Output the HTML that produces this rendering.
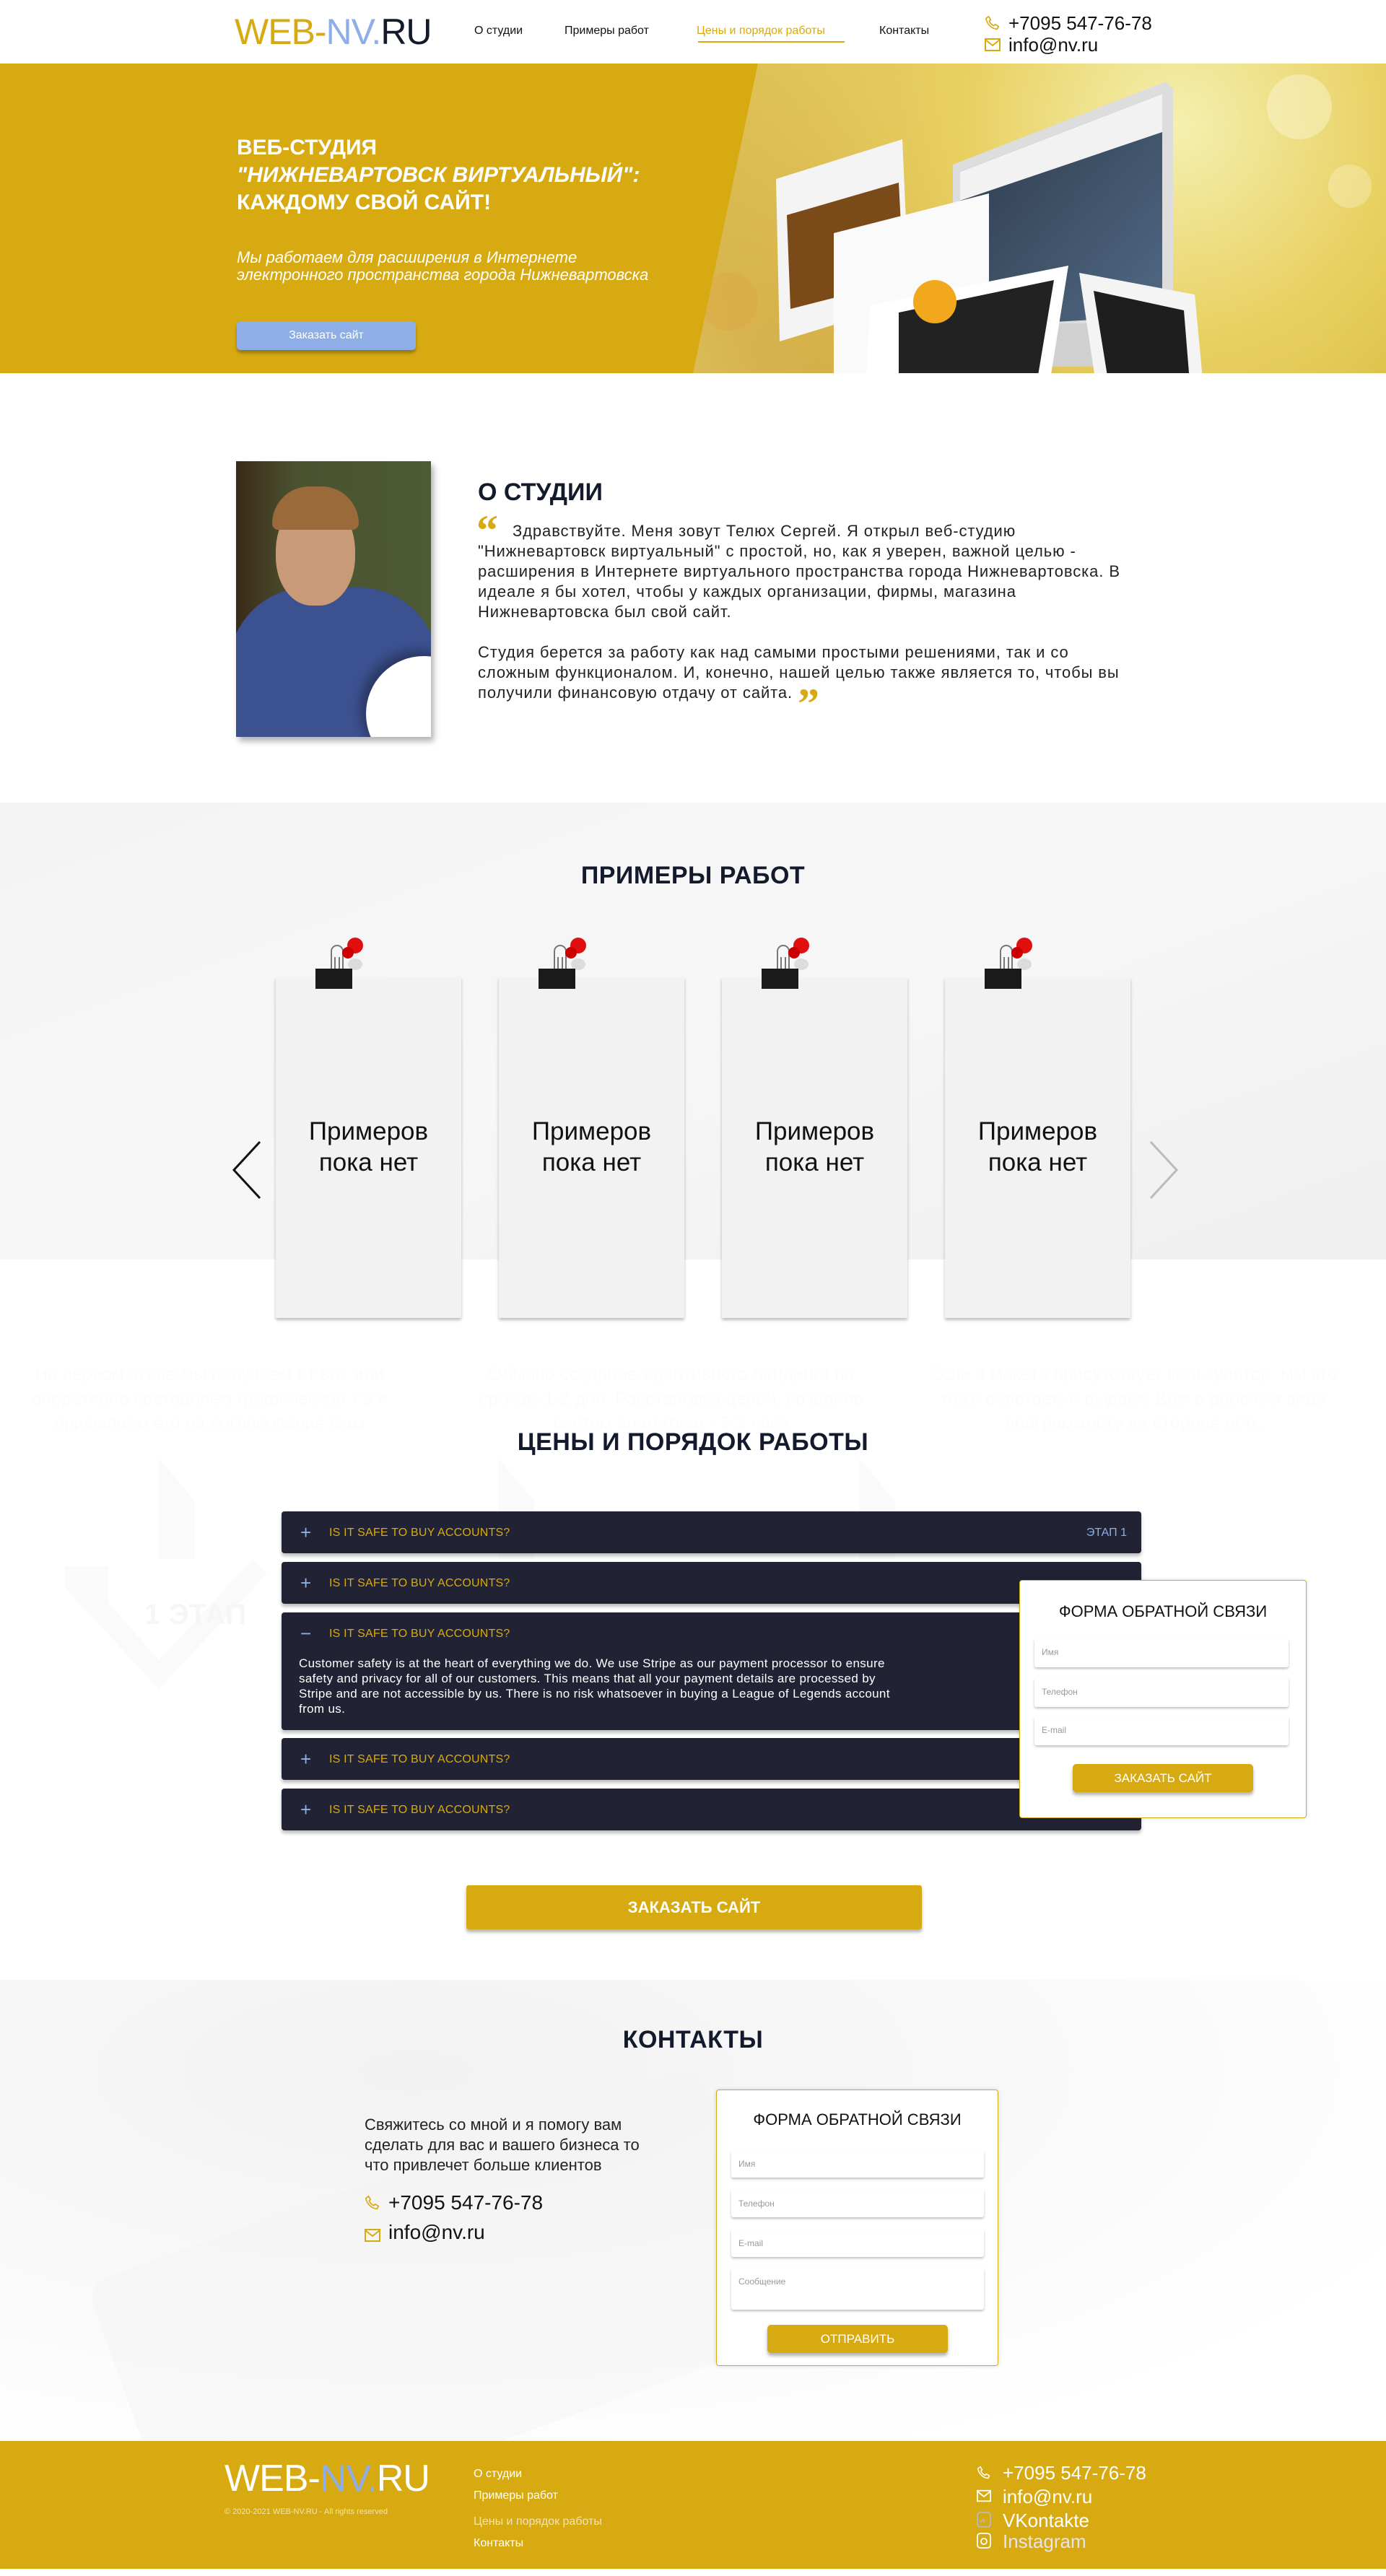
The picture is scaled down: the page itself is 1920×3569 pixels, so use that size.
<!DOCTYPE html>
<html><head><meta charset="utf-8">
<style>
*{margin:0;padding:0;box-sizing:border-box}
body{width:1920px;height:3569px;position:relative;background:#fff;font-family:"Liberation Sans",Arial,sans-serif;color:#111;overflow:hidden}
.a{position:absolute}
.navy{color:#131a2c}
.h2{font-size:34px;font-weight:bold;color:#131a2c;text-align:center;width:100%;letter-spacing:0.5px}
.card{position:absolute;top:1354px;width:257px;height:472px;background:#f2f2f2;box-shadow:0 3px 4px rgba(0,0,0,.25);text-align:center;font-size:35px;line-height:43px;color:#111;padding-top:192px}
.clip{position:absolute;top:-58px;left:52px}
.acc{position:absolute;left:390px;width:1191px;background:#212334;border-radius:4px;box-shadow:0 4px 5px rgba(0,0,0,.25);color:#d8aa12;font-size:16px}
.acc .t{position:absolute;left:66px;top:21px;letter-spacing:.2px}
.acc .p{position:absolute;left:26px;top:16px;color:#8daee6;font-size:26px;line-height:26px;font-weight:300}
.form{position:absolute;background:#fff;border:1px solid #d8aa12;border-radius:4px;box-shadow:0 0 6px rgba(0,0,0,.15)}
.inp{position:absolute;background:#fff;border-radius:3px;box-shadow:0 2px 3px rgba(0,0,0,.25);color:#999;font-size:12px;padding:12px 10px}
.btn{position:absolute;background:#d8aa12;color:#fff;text-align:center;border-radius:5px;box-shadow:0 4px 5px rgba(0,0,0,.3)}
.faint{position:absolute;color:#fcfcfc;font-size:25px;line-height:34px;text-align:center}
</style></head><body>

<!-- HEADER -->
<div class="a" style="left:325px;top:16px;font-size:50px;line-height:56px;letter-spacing:-1px"><span style="color:#d8aa12">WEB-</span><span style="color:#8daee6">NV.</span><span style="color:#131a2c">RU</span></div>
<div class="a" style="left:657px;top:34px;font-size:16px">О студии</div>
<div class="a" style="left:782px;top:34px;font-size:16px">Примеры работ</div>
<div class="a" style="left:965px;top:34px;font-size:16px;color:#d8aa12">Цены и порядок работы</div>
<div class="a" style="left:967px;top:57px;width:203px;height:2px;background:#d8aa12"></div>
<div class="a" style="left:1218px;top:34px;font-size:16px">Контакты</div>
<svg class="a" style="left:1364px;top:21px" width="22" height="22" viewBox="0 0 24 24" fill="none" stroke="#d8aa12" stroke-width="1.8"><path d="M6 2l3 5-2 2c1 3 4 6 7 7l2-2 5 3-2 4C11 21 3 13 2 5z"/></svg>
<div class="a" style="left:1397px;top:17px;font-size:26px">+7095 547-76-78</div>
<svg class="a" style="left:1364px;top:53px" width="22" height="18" viewBox="0 0 22 18" fill="none" stroke="#d8aa12" stroke-width="2"><rect x="1" y="1" width="20" height="16"/><path d="M1 2l10 8 10-8"/></svg>
<div class="a" style="left:1397px;top:47px;font-size:26px">info@nv.ru</div>

<!-- HERO -->
<div class="a" style="left:0;top:88px;width:1920px;height:429px;background:radial-gradient(circle at 85% 20%,#f5f0b0 0,#e8d060 18%,transparent 40%),radial-gradient(circle at 70% 85%,#c48a20 0,transparent 35%),linear-gradient(120deg,#c99a1c 0%,#d9b845 40%,#e7d780 70%,#cdb030 100%)"></div>
<svg class="a" style="left:950px;top:88px" width="970" height="429">
<defs><linearGradient id="sc" x1="0" y1="0" x2="1" y2="1"><stop offset="0" stop-color="#2c3848"/><stop offset="1" stop-color="#516a86"/></linearGradient></defs>
<circle cx="850" cy="60" r="45" fill="#fffbe0" opacity=".4"/><circle cx="920" cy="170" r="30" fill="#fffbe0" opacity=".3"/><circle cx="60" cy="330" r="40" fill="#e0a040" opacity=".3"/>
<path d="M370 140 L665 25 L675 35 L675 370 L370 380Z" fill="#ddd"/>
<path d="M380 150 L660 42 L660 350 L380 365Z" fill="url(#sc)"/>
<path d="M380 150 L660 42 L660 95 L380 190Z" fill="#f2f2f2"/>
<path d="M470 360 L560 360 L575 420 L480 420Z" fill="#d0d0d0"/>
<path d="M125 160 L300 105 L310 330 L130 385Z" fill="#f4f4f4"/>
<path d="M140 210 L295 165 L302 300 L145 340Z" fill="#7a4a18"/>
<path d="M205 235 L420 180 L420 420 L205 445Z" fill="#fafafa"/>
<path d="M255 335 L530 280 L495 500 L248 485Z" fill="#fff"/>
<path d="M295 345 L510 300 L480 480 L295 470Z" fill="#222"/>
<circle cx="345" cy="330" r="30" fill="#f2a81c"/>
<path d="M545 290 L705 320 L720 480 L575 490Z" fill="#f4f4f4"/>
<path d="M565 315 L690 342 L700 465 L590 470Z" fill="#1e1e1e"/>
</svg>
<div class="a" style="left:0;top:88px;width:1050px;height:429px;background:#d8aa12;clip-path:polygon(0 0,1050px 0,960px 429px,0 429px)"></div>
<div class="a" style="left:328px;top:186px;color:#fff;font-weight:bold;font-size:30px;line-height:38px">ВЕБ-СТУДИЯ<br><i>"НИЖНЕВАРТОВСК ВИРТУАЛЬНЫЙ":</i><br>КАЖДОМУ СВОЙ САЙТ!</div>
<div class="a" style="left:328px;top:345px;color:#fff;font-style:italic;font-size:22px;line-height:24px">Мы работаем для расширения в Интернете<br>электронного пространства города Нижневартовска</div>
<div class="a" style="left:328px;top:445px;width:248px;height:40px;background:#8daee6;border-radius:5px;box-shadow:0 4px 5px rgba(0,0,0,.3);color:#fff;font-size:16px;text-align:center;line-height:40px">Заказать сайт</div>

<!-- ABOUT -->
<div class="a" style="left:327px;top:639px;width:270px;height:382px;background:linear-gradient(90deg,#3a2a18 0,#4a5230 30%,#4d5a34 100%);box-shadow:4px 6px 8px rgba(0,0,0,.3);overflow:hidden">
 <div class="a" style="left:-10px;top:175px;width:290px;height:230px;background:#3c5190;border-radius:110px 110px 0 0"></div>
 <div class="a" style="left:55px;top:50px;width:110px;height:150px;background:#c99a78;border-radius:50% 50% 45% 45%"></div>
 <div class="a" style="left:50px;top:35px;width:120px;height:60px;background:#9a6a3a;border-radius:60px 60px 10px 10px"></div>
 <div class="a" style="left:180px;top:270px;width:160px;height:160px;background:#fff;border-radius:50%;box-shadow:-8px -8px 14px rgba(0,0,0,.3)"></div>
</div>
<div class="a navy" style="left:662px;top:663px;font-size:34px;font-weight:bold">О СТУДИИ</div>
<div class="a" style="left:660px;top:705px;font-size:60px;color:#d8aa12;font-family:'Liberation Serif',serif;font-weight:bold;line-height:60px">“</div>
<div class="a" style="left:662px;top:722px;width:960px;font-size:22px;line-height:28px;color:#222;white-space:nowrap;letter-spacing:0.9px"><span style="padding-left:48px"></span>Здравствуйте. Меня зовут Телюх Сергей. Я открыл веб-студию<br>"Нижневартовск виртуальный" с простой, но, как я уверен, важной целью -<br>расширения в Интернете виртуального пространства города Нижневартовска. В<br>идеале я бы хотел, чтобы у каждых организации, фирмы, магазина<br>Нижневартовска был свой сайт.</div>
<div class="a" style="left:662px;top:890px;width:960px;font-size:22px;line-height:28px;color:#222;white-space:nowrap;letter-spacing:0.9px">Студия берется за работу как над самыми простыми решениями, так и со<br>сложным функционалом. И, конечно, нашей целью также является то, чтобы вы<br>получили финансовую отдачу от сайта. <span style="font-size:60px;line-height:10px;color:#d8aa12;font-family:'Liberation Serif',serif;font-weight:bold;vertical-align:-28px">”</span></div>

<!-- EXAMPLES -->
<div class="a" style="left:0;top:1112px;width:1920px;height:633px;background:linear-gradient(160deg,#f4f4f4 0,#f7f7f7 50%,#efefef 100%)"></div>
<div class="a h2" style="left:0;top:1194px">ПРИМЕРЫ РАБОТ</div>
<svg class="a" style="left:318px;top:1580px" width="46" height="82"><path d="M42 2 L6 41 L42 80" fill="none" stroke="#111" stroke-width="3"/></svg>
<svg class="a" style="left:1590px;top:1580px" width="46" height="82"><path d="M4 2 L40 41 L4 80" fill="none" stroke="#bbb" stroke-width="3"/></svg>

<div class="card" style="left:382px"><svg class="clip" width="80" height="80"><ellipse cx="58" cy="40" rx="10" ry="8" fill="#ccc" opacity=".6"/><path d="M25 50 V22 a8 8 0 0 1 16 0 V50 M30 50 V30 M36 50 V30" fill="none" stroke="#777" stroke-width="2"/><rect x="3" y="46" width="51" height="28" fill="#1a1a1a"/><circle cx="58" cy="14" r="11" fill="#e01010"/><circle cx="48" cy="24" r="8" fill="#c00"/></svg>Примеров<br>пока нет</div>
<div class="card" style="left:691px"><svg class="clip" width="80" height="80"><ellipse cx="58" cy="40" rx="10" ry="8" fill="#ccc" opacity=".6"/><path d="M25 50 V22 a8 8 0 0 1 16 0 V50 M30 50 V30 M36 50 V30" fill="none" stroke="#777" stroke-width="2"/><rect x="3" y="46" width="51" height="28" fill="#1a1a1a"/><circle cx="58" cy="14" r="11" fill="#e01010"/><circle cx="48" cy="24" r="8" fill="#c00"/></svg>Примеров<br>пока нет</div>
<div class="card" style="left:1000px"><svg class="clip" width="80" height="80"><ellipse cx="58" cy="40" rx="10" ry="8" fill="#ccc" opacity=".6"/><path d="M25 50 V22 a8 8 0 0 1 16 0 V50 M30 50 V30 M36 50 V30" fill="none" stroke="#777" stroke-width="2"/><rect x="3" y="46" width="51" height="28" fill="#1a1a1a"/><circle cx="58" cy="14" r="11" fill="#e01010"/><circle cx="48" cy="24" r="8" fill="#c00"/></svg>Примеров<br>пока нет</div>
<div class="card" style="left:1309px"><svg class="clip" width="80" height="80"><ellipse cx="58" cy="40" rx="10" ry="8" fill="#ccc" opacity=".6"/><path d="M25 50 V22 a8 8 0 0 1 16 0 V50 M30 50 V30 M36 50 V30" fill="none" stroke="#777" stroke-width="2"/><rect x="3" y="46" width="51" height="28" fill="#1a1a1a"/><circle cx="58" cy="14" r="11" fill="#e01010"/><circle cx="48" cy="24" r="8" fill="#c00"/></svg>Примеров<br>пока нет</div>

<!-- PRICES -->
<div class="faint" style="left:20px;top:1887px;width:540px">На первом этапе мы получаем от вас или оперативно составляем графическое ТЗ и присылаем его на согласование Вам</div>
<div class="faint" style="left:660px;top:1887px;width:540px">Обычно создание адаптивного лендинга по срокам 1-2 дня. Расстановка целей, создание систем аналитики - 2-3 часа</div>
<div class="faint" style="left:1260px;top:1887px;width:620px">Если в макете присутствует калькулятор, мы его тоже верстаем и выдаем Вам в рабочем виде программисту на стороне есть</div>
<svg class="a" style="left:90px;top:2020px" width="1540" height="420"><g fill="#fafafa"><path d="M130 0 L180 60 V140 H130Z M600 0 L650 60 V140 H600Z M1100 0 L1150 60 V140 H1100Z"/><path d="M0 150 H60 V200 L130 280 L260 140 L280 160 L130 320 L0 180Z"/></g><text x="110" y="230" font-size="40" fill="#f6f6f6" font-family="Liberation Sans" font-weight="bold">1 ЭТАП</text></svg>
<div class="a h2" style="left:0;top:1979px">ЦЕНЫ И ПОРЯДОК РАБОТЫ</div>

<div class="acc" style="top:2094px;height:58px"><span class="p">+</span><span class="t">IS IT SAFE TO BUY ACCOUNTS?</span><span class="a" style="right:20px;top:21px;color:#8daee6">ЭТАП 1</span></div>
<div class="acc" style="top:2164px;height:58px"><span class="p">+</span><span class="t">IS IT SAFE TO BUY ACCOUNTS?</span></div>
<div class="acc" style="top:2234px;height:163px"><span class="p">−</span><span class="t">IS IT SAFE TO BUY ACCOUNTS?</span><div class="a" style="left:24px;top:60px;width:950px;color:#fff;font-size:17px;line-height:21px;white-space:nowrap;letter-spacing:0.35px">Customer safety is at the heart of everything we do. We use Stripe as our payment processor to ensure<br>safety and privacy for all of our customers. This means that all your payment details are processed by<br>Stripe and are not accessible by us. There is no risk whatsoever in buying a League of Legends account<br>from us.</div></div>
<div class="acc" style="top:2408px;height:58px"><span class="p">+</span><span class="t">IS IT SAFE TO BUY ACCOUNTS?</span></div>
<div class="acc" style="top:2478px;height:58px"><span class="p">+</span><span class="t">IS IT SAFE TO BUY ACCOUNTS?</span></div>

<div class="form" style="left:1412px;top:2189px;width:398px;height:330px">
 <div class="a" style="left:0;top:30px;width:100%;text-align:center;font-size:22px">ФОРМА ОБРАТНОЙ СВЯЗИ</div>
 <div class="inp" style="left:20px;top:80px;width:352px;height:40px">Имя</div>
 <div class="inp" style="left:20px;top:135px;width:352px;height:40px">Телефон</div>
 <div class="inp" style="left:20px;top:188px;width:352px;height:40px">E-mail</div>
 <div class="btn" style="left:73px;top:254px;width:250px;height:39px;line-height:39px;font-size:17px">ЗАКАЗАТЬ САЙТ</div>
</div>
<div class="btn" style="left:646px;top:2612px;width:631px;height:61px;line-height:61px;font-size:22px;font-weight:bold;border-radius:3px">ЗАКАЗАТЬ САЙТ</div>

<!-- CONTACTS -->
<div class="a" style="left:0;top:2743px;width:1920px;height:640px;background:radial-gradient(ellipse at 30% 20%,#f2f2f2 0,#f8f8f8 40%,#fff 80%),#fafafa"></div>
<div class="a" style="left:160px;top:3000px;width:900px;height:400px;background:#f3f3f3;opacity:.5;transform:rotate(-20deg);border-radius:30px"></div>
<div class="a h2" style="left:0;top:2807px">КОНТАКТЫ</div>
<div class="a" style="left:505px;top:2930px;font-size:22px;line-height:28px;color:#222">Свяжитесь со мной и я помогу вам<br>сделать для вас и вашего бизнеса то<br>что привлечет больше клиентов</div>
<svg class="a" style="left:505px;top:3040px" width="22" height="24" viewBox="0 0 24 24" fill="none" stroke="#d8aa12" stroke-width="1.8"><path d="M6 2l3 5-2 2c1 3 4 6 7 7l2-2 5 3-2 4C11 21 3 13 2 5z"/></svg>
<div class="a" style="left:538px;top:3036px;font-size:28px">+7095 547-76-78</div>
<svg class="a" style="left:505px;top:3087px" width="22" height="20" viewBox="0 0 22 18" fill="none" stroke="#d8aa12" stroke-width="2"><rect x="1" y="1" width="20" height="16"/><path d="M1 2l10 8 10-8"/></svg>
<div class="a" style="left:538px;top:3077px;font-size:28px">info@nv.ru</div>

<div class="form" style="left:992px;top:2895px;width:391px;height:383px">
 <div class="a" style="left:0;top:28px;width:100%;text-align:center;font-size:22px">ФОРМА ОБРАТНОЙ СВЯЗИ</div>
 <div class="inp" style="left:20px;top:83px;width:350px;height:38px">Имя</div>
 <div class="inp" style="left:20px;top:138px;width:350px;height:38px">Телефон</div>
 <div class="inp" style="left:20px;top:193px;width:350px;height:38px">E-mail</div>
 <div class="inp" style="left:20px;top:246px;width:350px;height:58px">Сообщение</div>
 <div class="btn" style="left:70px;top:325px;width:250px;height:39px;line-height:39px;font-size:17px">ОТПРАВИТЬ</div>
</div>

<!-- FOOTER -->
<div class="a" style="left:0;top:3382px;width:1920px;height:177px;background:#d8aa12"></div>
<div class="a" style="left:311px;top:3404px;font-size:52px;color:#fff;letter-spacing:-1px">WEB-<span style="color:#8daee6">NV.</span>RU</div>
<div class="a" style="left:311px;top:3474px;font-size:11px;color:#f3e3b0">© 2020-2021 WEB-NV.RU - All rights reserved</div>
<div class="a" style="left:656px;top:3419px;font-size:16px;color:#fff">О студии</div>
<div class="a" style="left:656px;top:3449px;font-size:16px;color:#fff">Примеры работ</div>
<div class="a" style="left:656px;top:3485px;font-size:16px;color:#f0e2b8">Цены и порядок работы</div>
<div class="a" style="left:656px;top:3515px;font-size:16px;color:#fff">Контакты</div>
<svg class="a" style="left:1353px;top:3415px" width="20" height="22" viewBox="0 0 24 24" fill="none" stroke="#fff" stroke-width="1.8"><path d="M6 2l3 5-2 2c1 3 4 6 7 7l2-2 5 3-2 4C11 21 3 13 2 5z"/></svg>
<div class="a" style="left:1389px;top:3411px;font-size:26px;color:#fff">+7095 547-76-78</div>
<svg class="a" style="left:1353px;top:3449px" width="20" height="18" viewBox="0 0 22 18" fill="none" stroke="#fff" stroke-width="2"><rect x="1" y="1" width="20" height="16"/><path d="M1 2l10 8 10-8"/></svg>
<div class="a" style="left:1389px;top:3444px;font-size:26px;color:#fff">info@nv.ru</div>
<svg class="a" style="left:1353px;top:3480px" width="20" height="22"><rect x="1" y="1" width="18" height="20" rx="4" fill="none" stroke="#a9c0e8" stroke-width="1.5"/><text x="4" y="15" font-size="8" fill="#a9c0e8" font-family="Liberation Sans">vk</text></svg>
<div class="a" style="left:1389px;top:3477px;font-size:26px;color:#fff">VKontakte</div>
<svg class="a" style="left:1353px;top:3509px" width="20" height="22"><rect x="1" y="1" width="18" height="20" rx="4" fill="none" stroke="#fff" stroke-width="1.8"/><circle cx="10" cy="12" r="4" fill="none" stroke="#fff" stroke-width="1.8"/></svg>
<div class="a" style="left:1389px;top:3506px;font-size:26px;color:#e4e4ea">Instagram</div>

</body></html>
